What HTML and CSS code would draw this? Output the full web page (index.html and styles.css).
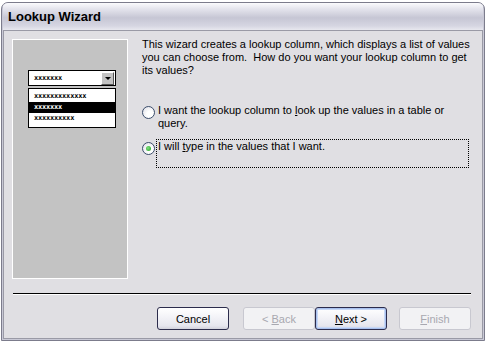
FILE: index.html
```html
<!DOCTYPE html>
<html lang="en">
<head>
  <meta charset="UTF-8" />
  <title>Lookup Wizard</title>
  <link rel="stylesheet" href="styles.css">
</head>
<body>
  <div class="window">
    <div class="titlebar">Lookup Wizard</div>
    <div class="client">
      <div class="main">
        <div class="picture">
          <div class="combo">
            <span class="dummy">xxxxxxx</span>
            <span class="drop"></span>
          </div>
          <div class="list">
            <div class="row"><span class="dummy">xxxxxxxxxxxxx</span></div>
            <div class="row selected"><span class="dummy">xxxxxxx</span></div>
            <div class="row"><span class="dummy">xxxxxxxxxx</span></div>
          </div>
        </div>
        <div class="content">
          <p class="intro">This wizard creates a lookup column, which displays a list of values<br>you can choose from.&nbsp; How do you want your lookup column to get<br>its values?</p>
          <div class="option">
            <span class="radio"></span>
            <span class="label">I want the lookup column to <u>l</u>ook up the values in a table or<br>query.</span>
          </div>
          <div class="option checked">
            <span class="radio"></span>
            <span class="label focus">I will <u>t</u>ype in the values that I want.</span>
          </div>
        </div>
      </div>
      <div class="separator"></div>
      <div class="buttons">
        <button class="btn">Cancel</button>
        <div class="pair">
          <button class="btn" disabled>&lt; <u>B</u>ack</button>
          <button class="btn default"><u>N</u>ext &gt;</button>
        </div>
        <button class="btn" disabled><u>F</u>inish</button>
      </div>
    </div>
  </div>
</body>
</html>
```

FILE: styles.css
```css
body {
  margin: 0;
  background-color: #ffffff;
  font-family: "Liberation Sans", Arial, sans-serif;
  font-size: 11px;
  color: #000;
}
.window {
  margin: 2px 0 0 1px;
  width: 484px;
  height: 339px;
  box-sizing: border-box;
  border: 1px solid #7c7c8c;
  border-radius: 7px 7px 0 0;
  background-color: #c9c9d6;
  padding: 0 1px 1px 1px;
  display: flex;
  flex-direction: column;
  overflow: hidden;
}
.titlebar {
  height: 27px;
  flex: none;
  box-sizing: border-box;
  padding: 6px 0 0 5px;
  font-size: 13px;
  font-weight: bold;
  color: #000;
  background: linear-gradient(#fbfbfd 0%, #e6e6ee 20%, #c6c6d4 55%, #d6d6e2 85%, #e8e8ef 100%);
}
.client {
  flex: 1;
  border: 1px solid #9a9aa6;
  background-color: #e0dfe3;
  padding: 8px 10px 0 8px;
  display: flex;
  flex-direction: column;
}
.main {
  display: flex;
  height: 241px;
}
.picture {
  border: 1px solid #ffffff;
  background-color: #c3c3c3;
  padding: 30px 0 0 15px;
  width: 99px;
  height: 208px;
}
.combo {
  height: 14px;
  width: 81px;
  border: 1px solid #000;
  background-color: #fff;
  display: flex;
  align-items: center;
  justify-content: space-between;
  padding-left: 5px;
}
.dummy {
  font-family: "DejaVu Sans Mono", monospace;
  font-size: 7px;
  font-weight: bold;
  line-height: 7px;
  letter-spacing: -0.2px;
}
.drop {
  width: 11px;
  height: 11px;
  margin-right: 1px;
  background-color: #c3c3c3;
  border: 1px solid;
  border-color: #fff #555 #555 #fff;
  position: relative;
}
.drop::after {
  content: "";
  position: absolute;
  left: 3px;
  top: 4px;
  border-left: 3px solid transparent;
  border-right: 3px solid transparent;
  border-top: 3px solid #000;
}
.list {
  margin-top: 2px;
  width: 86px;
  border: 1px solid #000;
  background-color: #fff;
  padding: 2px 0 3px 0;
}
.row {
  height: 11px;
  display: flex;
  align-items: center;
  padding-left: 5px;
}
.row.selected {
  background-color: #000;
  color: #fff;
}
.content {
  margin-left: 14px;
  margin-top: -1px;
}
.intro {
  margin: 0;
  line-height: 13px;
}
.option {
  display: flex;
  align-items: flex-start;
  margin-top: 27px;
}
.option.checked {
  margin-top: 10px;
}
.radio {
  flex: none;
  width: 11px;
  height: 11px;
  border: 1px solid #3b4d6b;
  border-radius: 50%;
  background: radial-gradient(circle at 65% 65%, #ffffff 30%, #dcdce4 100%);
  margin-top: 2px;
  position: relative;
}
.checked .radio::after {
  content: "";
  position: absolute;
  left: 3px;
  top: 3px;
  width: 5px;
  height: 5px;
  border-radius: 50%;
  background: radial-gradient(circle at 40% 40%, #7fe07f, #21a121);
}
.label {
  margin-left: 3px;
  line-height: 13px;
  width: 310px;
}
.label.focus {
  border: 1px dotted #000;
  height: 27px;
  padding-left: 1px;
  margin-left: 1px;
  margin-top: -1px;
}
.separator {
  margin-top: 13px;
  margin-left: 1px;
  height: 1px;
  background-color: #000;
  border-bottom: 1px solid #fff;
  width: 458px;
}
.buttons {
  margin-top: 12px;
  display: flex;
  justify-content: flex-end;
  gap: 12px;
  padding-right: 1px;
}
.buttons > .btn:first-child {
  margin-right: 2px;
}
.pair {
  display: flex;
}
.btn {
  width: 72px;
  height: 23px;
  font-family: "Liberation Sans", Arial, sans-serif;
  font-size: 11px;
  color: #000;
  border: 1px solid #2c2c4c;
  border-radius: 3px;
  background: linear-gradient(#ffffff 0%, #f4f4f8 40%, #e6e6ee 85%, #d2d2dc 100%);
  padding: 0;
}
.btn.default {
  box-shadow: inset 0 0 0 1px #a8c0ee, inset 0 0 0 2px #c8d8f6;
}
.btn:disabled {
  border-color: #c8c8d0;
  color: #a8a8b0;
  background: #f2f2f4;
}
```
